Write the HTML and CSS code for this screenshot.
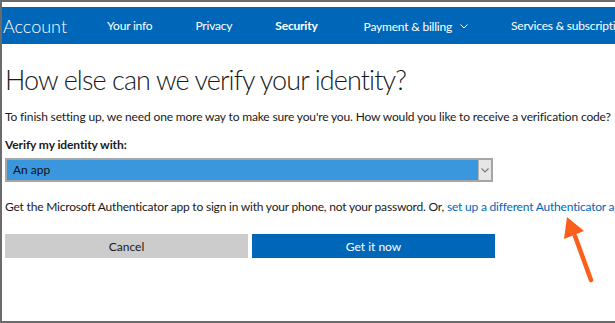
FILE: index.html
```html
<!DOCTYPE html>
<html lang="en">
<head>
  <meta charset="UTF-8" />
  <title>Security</title>
  <link rel="stylesheet" href="styles.css">
</head>
<body>
  <div class="frame">
    <div class="navbar">
      <span class="brand">Account</span>
      <a href="#">Your info</a>
      <a href="#">Privacy</a>
      <a href="#" class="active">Security</a>
      <a href="#">Payment &amp; billing <span class="chev"><svg width="8" height="5" viewBox="0 0 8 5"><path d="M0.5 0.5 L4 4 L7.5 0.5" fill="none" stroke="#fff" stroke-width="1"/></svg></span></a>
      <a href="#">Services &amp; subscriptions</a>
    </div>
    <div class="main">
      <h1>How else can we verify your identity?</h1>
      <p class="intro">To finish setting up, we need one more way to make sure you're you. How would you like to receive a verification code?</p>
      <label class="field-label">Verify my identity with:</label>
      <div class="select">
        <span class="select-value">An app</span>
        <span class="select-arrow">
          <svg width="8" height="5" viewBox="0 0 8 5"><path d="M0.5 0.5 L4 4 L7.5 0.5" fill="none" stroke="#777" stroke-width="1.1"/></svg>
        </span>
      </div>
      <p class="note">Get the Microsoft Authenticator app to sign in with your phone, not your password. Or, <a href="#">set up a different Authenticator app</a></p>
      <div class="actions">
        <button class="btn btn-cancel">Cancel</button>
        <button class="btn btn-primary">Get it now</button>
      </div>
    </div>
    <!-- annotation arrow -->
    <svg class="pointer" width="40" height="70" viewBox="0 0 40 70">
      <line x1="28" y1="64" x2="12" y2="20" stroke="#fc5f1c" stroke-width="4.5" stroke-linecap="round"/>
      <polygon points="4,1 1,23 21,15" fill="#fc5f1c"/>
    </svg>
  </div>
</body>
</html>
```

FILE: styles.css
```css
* {margin: 0; padding: 0; box-sizing: border-box;}
body {font-family: 'Lato', 'Open Sans', sans-serif; background: #fff; overflow: hidden;}
.frame {position: relative; width: 615px; height: 323px; border-top: 2px solid #6b6b6b; border-left: 2px solid #6b6b6b; border-bottom: 2px solid #6b6b6b; padding-top: 5px; overflow: hidden; white-space: nowrap;}

.navbar {display: flex; align-items: center; height: 37px; background: #0067b8; color: #fff;}
.brand {font-size: 18px; font-weight: 300; padding-left: 1px; margin-right: 40px;}
.navbar a {color: #fff; text-decoration: none; font-size: 12px; letter-spacing: -0.2px; margin-right: 43px;}
.navbar a.active {font-weight: 700; margin-right: 46px;}
.chev {display: inline-block; margin-left: 5px; vertical-align: 2px;}

.main {padding: 17px 3px 0;}
h1 {font-size: 27px; font-weight: 300; color: #1a1a1a; line-height: 38px; letter-spacing: -0.9px;}
.intro {font-size: 12px; color: #1a1a1a; margin-top: 9px; line-height: 18px; letter-spacing: -0.15px;}
.field-label {display: block; font-size: 12px; font-weight: 700; color: #1a1a1a; margin-top: 10px; line-height: 18px; letter-spacing: -0.1px;}
.select {display: flex; width: 488px; height: 24px; margin-top: 4px; border: 2px solid #a6a6a6; background: #3a96dd;}
.select-value {flex: 1; font-size: 12px; color: #111; padding-left: 6px; line-height: 20px;}
.select-arrow {width: 13px; background: #e6e6e6; border-left: 1px solid #b3b3b3; display: flex; align-items: center; justify-content: center;}
.note {font-size: 12px; color: #1a1a1a; margin-top: 16px; line-height: 18px; letter-spacing: -0.2px;}
.note a {color: #0067b8; text-decoration: none;}

.actions {display: flex; gap: 4px; margin-top: 18px;}
.btn {width: 243px; height: 24px; border: none; font-family: inherit; font-size: 12px; cursor: pointer;}
.btn-cancel {background: #cccccc; color: #1a1a1a;}
.btn-primary {background: #0067b8; color: #fff;}

.pointer {position: absolute; left: 561px; top: 214px;}
```
